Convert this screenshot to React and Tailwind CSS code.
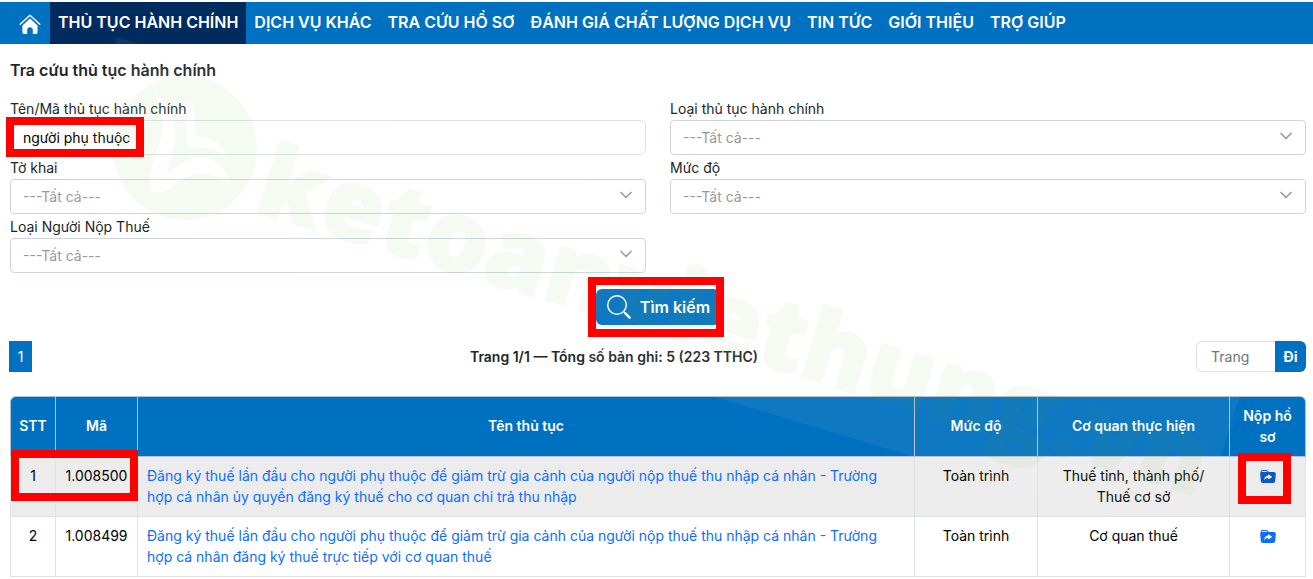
import React, { useState } from "react";
import { ChevronDown } from "lucide-react";
import { BsFolderSymlinkFill } from "react-icons/bs";

const menu = [
    "THỦ TỤC HÀNH CHÍNH",
    "DỊCH VỤ KHÁC",
    "TRA CỨU HỒ SƠ",
    "ĐÁNH GIÁ CHẤT LƯỢNG DỊCH VỤ",
    "TIN TỨC",
    "GIỚI THIỆU",
    "TRỢ GIÚP",
];

const rows = [
    {
        code: "1.008500",
        name: "Đăng ký thuế lần đầu cho người phụ thuộc để giảm trừ gia cảnh của người nộp thuế thu nhập cá nhân - Trường hợp cá nhân ủy quyền đăng ký thuế cho cơ quan chi trả thu nhập",
        level: "Toàn trình",
        agency: "Thuế tỉnh, thành phố/ Thuế cơ sở",
    },
    {
        code: "1.008499",
        name: "Đăng ký thuế lần đầu cho người phụ thuộc để giảm trừ gia cảnh của người nộp thuế thu nhập cá nhân - Trường hợp cá nhân đăng ký thuế trực tiếp với cơ quan thuế",
        level: "Toàn trình",
        agency: "Cơ quan thuế",
    },
];

function HomeIcon() {
    return (
        <svg viewBox="0 0 22 20" className="w-[22px] h-5" aria-hidden="true">
            <path d="M1.2 10.2 11 1.2l9.8 9" fill="none" stroke="white" strokeWidth="1.5" strokeLinecap="round" strokeLinejoin="round" />
            <path d="M11 4.4 18.6 11.4v6.9c0 1-.6 1.7-1.6 1.7h-3.2v-4a2.8 2.8 0 0 0-5.6 0v4H5c-1 0-1.6-.7-1.6-1.7v-6.9z" fill="white" />
        </svg>
    );
}

function SearchIcon() {
    return (
        <svg viewBox="0 0 26 26" className="w-[26px] h-[26px]" fill="none" stroke="white" strokeLinecap="round" aria-hidden="true">
            <circle cx="11" cy="11" r="9.3" strokeWidth="1.5" />
            <path d="m17.8 17.8 1.6 1.6" strokeWidth="1.5" />
            <path d="m19.4 19.4 4.2 4.2" strokeWidth="2.6" />
        </svg>
    );
}

// khung đỏ đánh dấu các bước
function Mark({ className }) {
    return <span className={`absolute z-10 border-8 border-[#ff0000] pointer-events-none ${className}`} />;
}

function Watermark() {
    return (
        <svg viewBox="0 0 1313 579" className="absolute left-0 top-0 w-[1313px] h-[579px] pointer-events-none" aria-hidden="true">
            <path d="M117 37 1245 378 1195 542 67 201z" fill="white" fillOpacity="0.06" />
            <g fill="#55b52e" stroke="#55b52e" opacity="0.06">
                <path
                    stroke="none"
                    fillRule="evenodd"
                    d="M185 76a72 72 0 1 0 .1 0z
                    M153 92c5 7 10 22 10 35 0 16-15 38-13 58 1 11 10 11 27-2 12-9 30-17 53 2-2-16-16-28-28-28-14 0-20 6-30 15-4 2-5-1-4-5 3-10 8-22 7-34-1-20-6-29-22-41z
                    M178 100 194 107c0 12 1 24 4 30 14-1 26 8 30 23-11-11-24-15-41-12 0-16-2-34-9-48z"
                />
                <text x="252" y="211" transform="rotate(16.8 252 211)" fontSize="100" strokeWidth="2" className="font-['Open_Sans',sans-serif] font-extrabold">ketoanviethung.vn</text>
            </g>
        </svg>
    );
}

function SelectField({ id, label }) {
    return (
        <div>
            <label htmlFor={id} className="block h-6 leading-[26px]">{label}</label>
            <div className="relative">
                <select id={id} className="block w-full h-[35px] appearance-none rounded-sm border border-[#ced4da] bg-white px-3 text-[#999999]">
                    <option>---Tất cả---</option>
                </select>
                <ChevronDown strokeWidth={2} className="absolute right-2.5 top-1.5 size-5 text-[#999999] pointer-events-none" />
            </div>
        </div>
    );
}

function App() {
    const [keyword, setKeyword] = useState("người phụ thuộc");
    const [page, setPage] = useState("");

    return (
        <div className="relative overflow-hidden bg-white pt-0.5 font-['Inter',sans-serif] text-sm text-[#212529]">
            <nav className="flex h-[42px] bg-[#0070c0] text-base font-semibold text-white">
                <a href="#" aria-label="Trang chủ" className="flex w-[50px] items-center justify-center pl-2.5 pt-0.5">
                    <HomeIcon />
                </a>
                {menu.map((item, i) => (
                    <a key={item} href="#" className={`flex items-center px-2 pb-0.5 whitespace-nowrap ${i === 0 ? "bg-[#002b5f]" : ""}`}>
                        {item}
                    </a>
                ))}
            </nav>

            <main className="pl-2.5 pr-[7px]">
                <h1 className="pt-4 text-base leading-5 font-semibold">Tra cứu thủ tục hành chính</h1>

                <form onSubmit={(e) => e.preventDefault()}>
                    <div className="mt-4 grid grid-cols-2 gap-x-6">
                        <div>
                            <label htmlFor="keyword" className="block h-6 leading-[26px]">Tên/Mã thủ tục hành chính</label>
                            <div className="relative">
                                <input
                                    id="keyword"
                                    type="text"
                                    value={keyword}
                                    onChange={(e) => setKeyword(e.target.value)}
                                    className="block w-full h-[35px] rounded-md border border-[#dee2e6] px-3 text-black"
                                />
                                <Mark className="-left-1 -top-[3px] w-[138px] h-10" />
                            </div>
                        </div>
                        <SelectField id="type" label="Loại thủ tục hành chính" />
                        <SelectField id="form" label="Tờ khai" />
                        <SelectField id="level" label="Mức độ" />
                        <SelectField id="payer" label="Loại Người Nộp Thuế" />
                    </div>

                    <div className="mt-4 flex justify-center">
                        <div className="relative">
                            <button type="submit" className="flex h-9 items-center gap-2 rounded-md bg-[#0070c0] px-2.5 text-base font-semibold text-white">
                                <SearchIcon />
                                Tìm kiếm
                            </button>
                            <Mark className="-left-2 -top-3 w-[136px] h-[60px]" />
                        </div>
                    </div>
                </form>

                <div className="mt-4 flex items-center justify-between">
                    <button className="-ml-px h-[31px] w-[23px] bg-[#0070c0] text-white">1</button>
                    <p className="font-semibold">Trang 1/1 — Tổng số bản ghi: 5 (223 TTHC)</p>
                    <div className="flex h-[31px]">
                        <input
                            aria-label="Trang"
                            placeholder="Trang"
                            value={page}
                            onChange={(e) => setPage(e.target.value)}
                            className="w-[79px] rounded-l-md border border-r-0 border-[#dee2e6] px-3.5 placeholder:text-[#6c757d]"
                        />
                        <button className="w-[31px] rounded-r-md bg-[#0070c0] font-bold text-white">Đi</button>
                    </div>
                </div>

                <table className="mt-6 w-full table-fixed border-separate border-spacing-0 leading-[21px] text-black">
                    <colgroup>
                        <col className="w-[46px]" />
                        <col className="w-[82px]" />
                        <col />
                        <col className="w-[123px]" />
                        <col className="w-[192px]" />
                        <col className="w-[76px]" />
                    </colgroup>
                    <thead>
                        <tr className="h-[61px] text-white [&>th]:border-b [&>th]:border-r [&>th]:border-t [&>th]:border-[#b5bfd0] [&>th]:bg-[#0070c0] [&>th]:px-2 [&>th]:pb-0.5 [&>th]:font-semibold">
                            <th className="rounded-tl-md border-l">STT</th>
                            <th>Mã</th>
                            <th>Tên thủ tục</th>
                            <th>Mức độ</th>
                            <th>Cơ quan thực hiện</th>
                            <th className="rounded-tr-md">Nộp hồ sơ</th>
                        </tr>
                    </thead>
                    <tbody>
                        {rows.map((row, i) => (
                            <tr
                                key={row.code}
                                className={`h-[60px] text-center align-top [&>td]:border-b [&>td]:border-r [&>td]:border-[#dee2e6] [&>td]:pt-2 ${i % 2 === 0 ? "bg-[#ececec]" : "bg-white"}`}
                            >
                                <td className="relative border-l">
                                    {i + 1}
                                    {i === 0 && <Mark className="left-0 -top-[7px] w-[127px] h-[51px]" />}
                                </td>
                                <td>{row.code}</td>
                                <td className="pl-[9px] pr-4 text-left">
                                    <a href="#" className="text-[#0d6efd]">{row.name}</a>
                                </td>
                                <td>{row.level}</td>
                                <td className="px-4">{row.agency}</td>
                                <td className="relative">
                                    <a href="#" aria-label="Nộp hồ sơ" className={`flex h-6 items-center justify-center ${i === 0 ? "text-[#0a58ca]" : "text-[#0d6efd]"}`}>
                                        <BsFolderSymlinkFill className="size-4" />
                                    </a>
                                    {i === 0 && <Mark className="left-2 -top-1 w-[53px] h-[51px]" />}
                                </td>
                            </tr>
                        ))}
                    </tbody>
                </table>
            </main>

            <Watermark />
        </div>
    );
}

export default App;
